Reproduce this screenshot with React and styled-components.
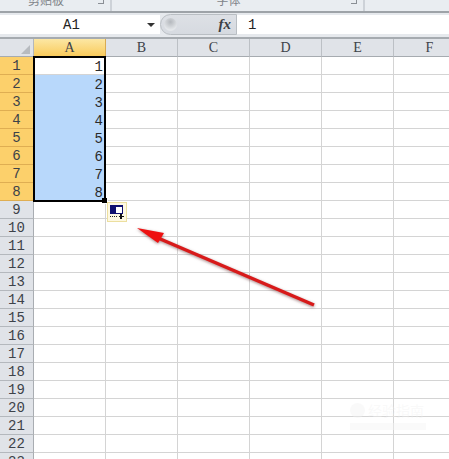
import React from "react";
import styled, { createGlobalStyle } from "styled-components";

const GlobalStyle = createGlobalStyle`
  html, body { margin: 0; padding: 0; background: #fff; }
  body { width: 449px; height: 459px; overflow: hidden; }
`;

const Window = styled.div`
  position: relative;
  width: 449px;
  height: 459px;
  overflow: hidden;
  font-family: "Liberation Mono", monospace;
  color: #222;
`;

const Ribbon = styled.div`
  display: flex;
  height: 13px;
  box-sizing: border-box;
  background: #e9edf1;
  border-bottom: 2px solid #9ea3a8;
  overflow: hidden;
`;

const RibbonGroup = styled.div`
  width: ${(p) => p.$w}px;
  flex: none;
  position: relative;
  border-right: 2px solid #cdd2d8;
  box-sizing: border-box;
  text-align: center;
  font-family: "Noto Sans CJK SC", sans-serif;
  font-size: 12px;
  line-height: 14px;
  color: #7f8489;
  span { display: block; margin-top: -7px; padding-right: 18px; }
`;

const Launcher = styled.i`
  position: absolute;
  right: 6px;
  top: 0;
  width: 5px;
  height: 3px;
  border-right: 1px solid #8a8f95;
  border-bottom: 1px solid #8a8f95;
`;

const FormulaBar = styled.div`
  display: flex;
  align-items: flex-start;
  height: 26px;
  padding-top: 2px;
  box-sizing: border-box;
  background: #e6e9ed;
  border-bottom: 2px solid #a6abb0;
`;

const NameBox = styled.div`
  position: relative;
  width: 160px;
  height: 19px;
  flex: none;
  background: #fff;
  font-size: 14px;
  line-height: 20px;
  padding-left: 63px;
  box-sizing: border-box;
`;

const Caret = styled.i`
  position: absolute;
  left: 147px;
  top: 8px;
  border-left: 4px solid transparent;
  border-right: 4px solid transparent;
  border-top: 4px solid #333;
`;

const FxPanel = styled.div`
  width: 77px;
  height: 21px;
  margin-top: -1px;
  flex: none;
  display: flex;
  align-items: center;
  justify-content: space-between;
  padding: 0 5px 0 3px;
  box-sizing: border-box;
  border-radius: 11px 0 0 11px;
  border: 1px solid #b9bec3;
  background: linear-gradient(#dde0e5, #d6dae0);
  font-family: "Liberation Serif", serif;
  font-style: italic;
  font-weight: bold;
  font-size: 15px;
  color: #3c3f44;
`;

const Grip = styled.i`
  width: 13px;
  height: 13px;
  border-radius: 50%;
  background: radial-gradient(circle at 50% 30%, #b4b8bd, #e4e7ea 70%);
`;

const FormulaInput = styled.div`
  flex: 1;
  height: 19px;
  background: #fff;
  font-size: 14px;
  line-height: 20px;
  padding-left: 11px;
`;

const Sheet = styled.div`
  display: grid;
  grid-template-columns: 34px repeat(6, 72px);
  grid-auto-rows: 18px;
`;

const Corner = styled.div`
  position: relative;
  background: #e0e3e8;
  border-right: 1px solid #b4b8bd;
  border-bottom: 1px solid #a6abb0;
  box-sizing: border-box;
  &::after {
    content: "";
    position: absolute;
    right: 3px;
    bottom: 2px;
    border-left: 9px solid transparent;
    border-bottom: 9px solid #b7bbc0;
  }
`;

const ColHead = styled.div`
  background: ${(p) => (p.$active ? "linear-gradient(#fce7a4, #f9cb5c)" : "#e0e3e8")};
  border-right: 1px solid ${(p) => (p.$active ? "#d9ab52" : "#bcc0c5")};
  border-bottom: 1px solid ${(p) => (p.$active ? "#c99a3f" : "#a6abb0")};
  box-sizing: border-box;
  font-family: "Liberation Serif", serif;
  font-size: 14px;
  line-height: 18px;
  text-align: center;
  color: #3d4249;
`;

const RowHead = styled.div`
  background: ${(p) => (p.$active ? "#fcd06b" : "#e0e3e8")};
  border-right: 1px solid ${(p) => (p.$active ? "#d9ab52" : "#a9adb2")};
  border-bottom: 1px solid ${(p) => (p.$active ? "#dfae52" : "#b4b8bd")};
  box-sizing: border-box;
  font-size: 14px;
  line-height: 19px;
  text-align: center;
  color: #3d4249;
`;

const Cell = styled.div`
  background: ${(p) => (p.$sel ? "#b8d8fb" : "#fff")};
  border-right: 1px solid #d4d4d4;
  border-bottom: 1px solid ${(p) => (p.$sel ? "#b8d8fb" : "#d4d4d4")};
  box-sizing: border-box;
  font-size: 14px;
  line-height: 20px;
  text-align: right;
  padding-right: 2px;
  color: #2a2a2a;
`;

const SelectionBox = styled.div`
  position: absolute;
  left: 33px;
  top: 56px;
  width: 73px;
  height: 146px;
  border: 2px solid #000;
  box-sizing: border-box;
`;

const FillHandle = styled.div`
  position: absolute;
  right: -3px;
  bottom: -3px;
  width: 5px;
  height: 5px;
  background: #000;
  box-shadow: 1px 1px 0 #fff;
`;

const PasteTag = styled.div`
  position: absolute;
  left: 107px;
  top: 202px;
  width: 20px;
  height: 20px;
  box-sizing: border-box;
  background: #fdf8e2;
  border: 1px solid #ecdf9f;
`;

const PasteIcon = styled.svg`
  display: block;
  margin: 2px 1px;
`;

const Arrow = styled.svg`
  position: absolute;
  left: 130px;
  top: 220px;
  overflow: visible;
  filter: drop-shadow(0 1px 1.5px rgba(90, 30, 30, 0.55));
`;

const Watermark = styled.div`
  position: absolute;
  left: 350px;
  top: 402px;
  width: 76px;
  display: flex;
  flex-wrap: wrap;
  align-items: center;
  gap: 5px 3px;
  color: rgba(240, 240, 240, 0.4);
  font-family: "Noto Sans CJK SC", sans-serif;
  font-size: 14px;
  line-height: 16px;
`;

const WatermarkLogo = styled.i`
  width: 15px;
  height: 15px;
  border-radius: 50%;
  background: rgba(240, 240, 240, 0.4);
`;

const WatermarkLine = styled.i`
  width: 76px;
  height: 7px;
  background: rgba(245, 245, 245, 0.45);
`;

const columns = ["A", "B", "C", "D", "E", "F"];
const rows = Array.from({ length: 23 }, (_, i) => i + 1);

export default function App() {
  return (
    <Window>
      <GlobalStyle />
      <Ribbon>
        <RibbonGroup $w={112}>
          <span>剪贴板</span>
          <Launcher />
        </RibbonGroup>
        <RibbonGroup $w={253}>
          <span>字体</span>
          <Launcher />
        </RibbonGroup>
      </Ribbon>
      <FormulaBar>
        <NameBox>
          A1
          <Caret />
        </NameBox>
        <FxPanel>
          <Grip />
          fx
        </FxPanel>
        <FormulaInput>1</FormulaInput>
      </FormulaBar>
      <Sheet>
        <Corner />
        {columns.map((c, i) => (
          <ColHead key={c} $active={i === 0}>
            {c}
          </ColHead>
        ))}
        {rows.map((r) => (
          <React.Fragment key={r}>
            <RowHead $active={r <= 8}>{r}</RowHead>
            {columns.map((c, i) => (
              <Cell key={c} $sel={i === 0 && r >= 2 && r <= 8}>
                {i === 0 && r <= 8 ? r : ""}
              </Cell>
            ))}
          </React.Fragment>
        ))}
      </Sheet>
      <SelectionBox>
        <FillHandle />
      </SelectionBox>
      <PasteTag>
        <PasteIcon width="16" height="15" viewBox="0 0 16 15" shapeRendering="crispEdges">
          <rect x="1.5" y="0.5" width="12" height="8" fill="#fff" stroke="#10106e" />
          <rect x="1" y="0" width="13" height="2" fill="#10106e" />
          <rect x="1" y="2" width="6" height="7" fill="#10106e" />
          <path d="M1 11h1M3 11h1M5 11h1M7 11h1" stroke="#222" />
          <path d="M12 9v5M9.5 11.5h5" stroke="#111" strokeWidth="1.2" />
        </PasteIcon>
      </PasteTag>
      <Arrow width="190" height="90" viewBox="0 0 190 90">
        <path d="M184 85 L28 18" stroke="#d81a1a" strokeWidth="3.5" />
        <polygon points="7,8 34,13 28,23" fill="#ee1111" />
      </Arrow>
      <Watermark>
        <WatermarkLogo />
        经验指南
        <WatermarkLine />
      </Watermark>
    </Window>
  );
}
